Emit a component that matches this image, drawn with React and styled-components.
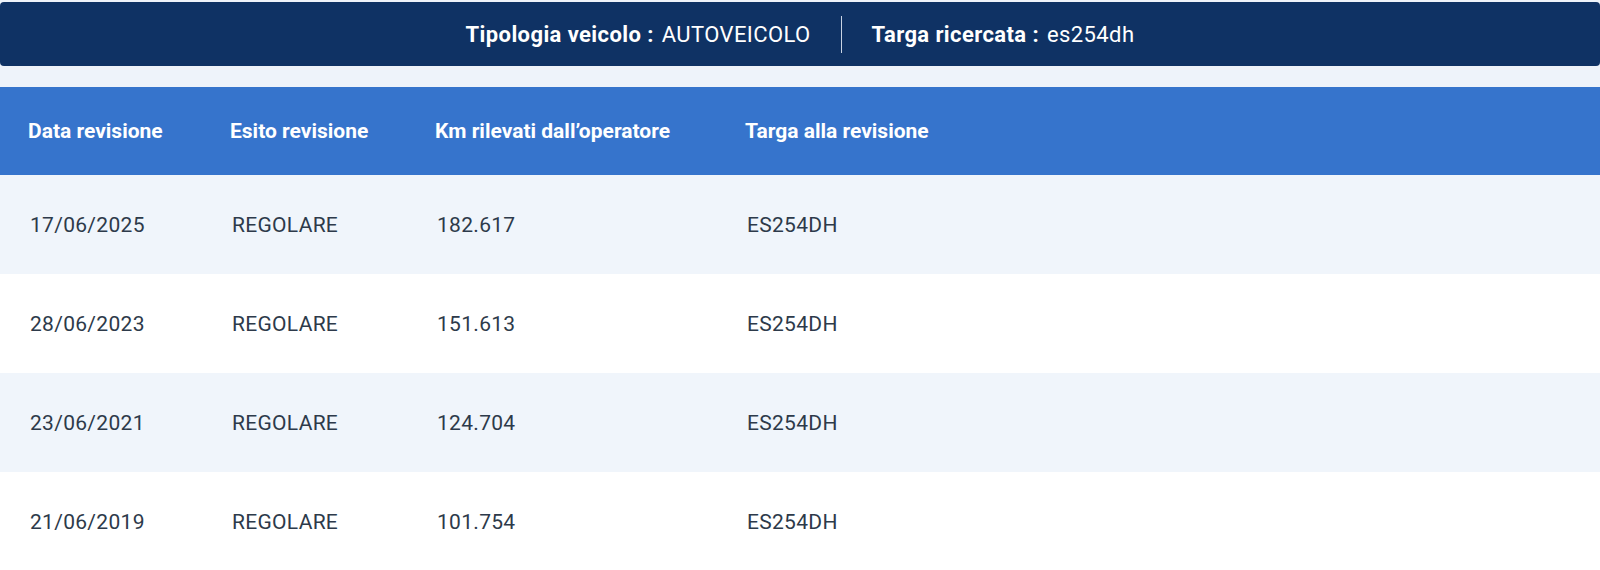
import styled, { createGlobalStyle } from 'styled-components';

const GlobalStyle = createGlobalStyle`
	html, body {
		margin: 0;
		padding: 0;
		background-color: #eef3fa;
		font-family: Roboto, "Open Sans", Arial, sans-serif;
	}
`;

const Page = styled.div`
	width: 1600px;
	padding-top: 2px;
`;

const InfoBar = styled.div`
	height: 64px;
	background-color: #0f3264;
	border-radius: 4px;
	display: flex;
	justify-content: center;
	align-items: center;
	color: #ffffff;
	font-size: 22px;
	letter-spacing: 0.4px;
`;

const InfoItem = styled.div`
	display: flex;
	align-items: baseline;
	gap: 8px;
`;

const Label = styled.span`
	font-weight: 700;
`;

const Value = styled.span`
	font-weight: 400;
`;

const Divider = styled.div`
	width: 1px;
	height: 37px;
	background-color: #c9d3e3;
	margin: 0 30px;
`;

const Table = styled.div`
	margin-top: 21px;
	display: flex;
	flex-direction: column;
`;

const Row = styled.div`
	display: grid;
	grid-template-columns: 202px 205px 310px 1fr;
	align-items: center;
	padding-left: 28px;
	height: ${props => props.header ? '88px' : '99px'};
	background-color: ${props => props.header ? '#3674cc' : props.alt ? '#f0f5fb' : '#ffffff'};
	color: ${props => props.header ? '#ffffff' : '#2d3a4a'};
	font-size: 21px;
	font-weight: ${props => props.header ? 700 : 400};
	letter-spacing: ${props => props.header ? '0' : '0.3px'};
`;

const Cell = styled.div`
	padding-left: ${props => props.header ? '0' : '2px'};
	white-space: nowrap;
`;

const columns = ['Data revisione', 'Esito revisione', 'Km rilevati dall\u2019operatore', 'Targa alla revisione'];

const revisions = [
	{ date: '17/06/2025', result: 'REGOLARE', km: '182.617', plate: 'ES254DH' },
	{ date: '28/06/2023', result: 'REGOLARE', km: '151.613', plate: 'ES254DH' },
	{ date: '23/06/2021', result: 'REGOLARE', km: '124.704', plate: 'ES254DH' },
	{ date: '21/06/2019', result: 'REGOLARE', km: '101.754', plate: 'ES254DH' },
];

function App() {
	return (
		<Page>
			<GlobalStyle />

			<InfoBar>
				<InfoItem>
					<Label>Tipologia veicolo :</Label>
					<Value>AUTOVEICOLO</Value>
				</InfoItem>
				<Divider />
				<InfoItem>
					<Label>Targa ricercata :</Label>
					<Value>es254dh</Value>
				</InfoItem>
			</InfoBar>

			<Table>
				<Row header>
					{columns.map(col => <Cell header key={col}>{col}</Cell>)}
				</Row>
				{revisions.map((rev, i) => (
					<Row key={rev.date} alt={i % 2 === 0}>
						<Cell>{rev.date}</Cell>
						<Cell>{rev.result}</Cell>
						<Cell>{rev.km}</Cell>
						<Cell>{rev.plate}</Cell>
					</Row>
				))}
			</Table>
		</Page>
	);
}

export default App;
